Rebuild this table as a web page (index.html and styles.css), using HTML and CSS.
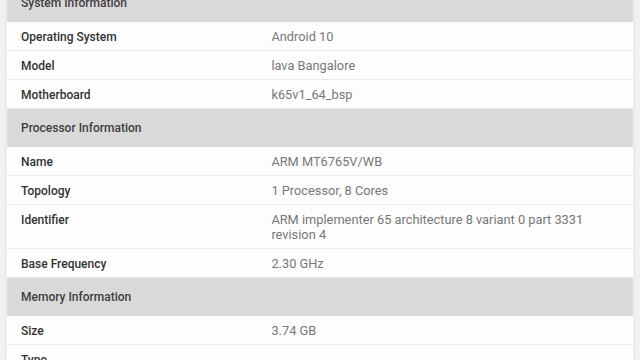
FILE: index.html
```html
<!DOCTYPE html>
<html>
<head>
<meta charset="utf-8">
<link rel="stylesheet" href="styles.css">
</head>
<body>
<div class="page">
  <table class="info">
    <colgroup><col class="c-label"><col class="c-value"></colgroup>
    <tr class="head"><th colspan="2">System Information</th></tr>
    <tr><td class="label">Operating System</td><td class="value">Android 10</td></tr>
    <tr><td class="label">Model</td><td class="value">lava Bangalore</td></tr>
    <tr><td class="label">Motherboard</td><td class="value">k65v1_64_bsp</td></tr>
    <tr class="head"><th colspan="2">Processor Information</th></tr>
    <tr><td class="label">Name</td><td class="value">ARM MT6765V/WB</td></tr>
    <tr><td class="label">Topology</td><td class="value">1 Processor, 8 Cores</td></tr>
    <tr><td class="label">Identifier</td><td class="value">ARM implementer 65 architecture 8 variant 0 part 3331 revision 4</td></tr>
    <tr><td class="label">Base Frequency</td><td class="value">2.30 GHz</td></tr>
    <tr class="head"><th colspan="2">Memory Information</th></tr>
    <tr><td class="label">Size</td><td class="value">3.74 GB</td></tr>
    <tr><td class="label">Type</td><td class="value"></td></tr>
  </table>
</div>
</body>
</html>
```

FILE: styles.css
```css
html, body {
  margin: 0;
  padding: 0;
  height: 100%;
  overflow: hidden;
}
body {
  background: #f1f1f1;
  font-family: Roboto, "Liberation Sans", sans-serif;
  font-size: 12px;
}
.page {
  margin: -16px 5px 0 5px;
  border-left: 1px solid #e4e4e4;
  border-right: 1px solid #e4e4e4;
  padding: 0 1px;
  background: #f3f3f3;
}
.info {
  width: 100%;
  border-collapse: collapse;
  table-layout: fixed;
  background: #fdfdfd;
}
.c-label { width: 40%; }
.info td, .info th {
  padding: 7px 14px 6px;
  line-height: 15px;
  text-align: left;
  vertical-align: top;
  border-bottom: 1px solid #e9e9e9;
}
.info tr.head th {
  background: #d9d9d9;
  color: #3f3f3f;
  font-weight: 500;
  font-size: 12px;
  padding: 11.5px 14px;
  border-bottom: 0;
}
.info td.label {
  color: #333333;
  font-weight: 500;
  padding-top: 8px;
  padding-bottom: 5px;
}
.value {
  color: #787878;
  font-weight: 400;
  font-size: 12.8px;
}
```
